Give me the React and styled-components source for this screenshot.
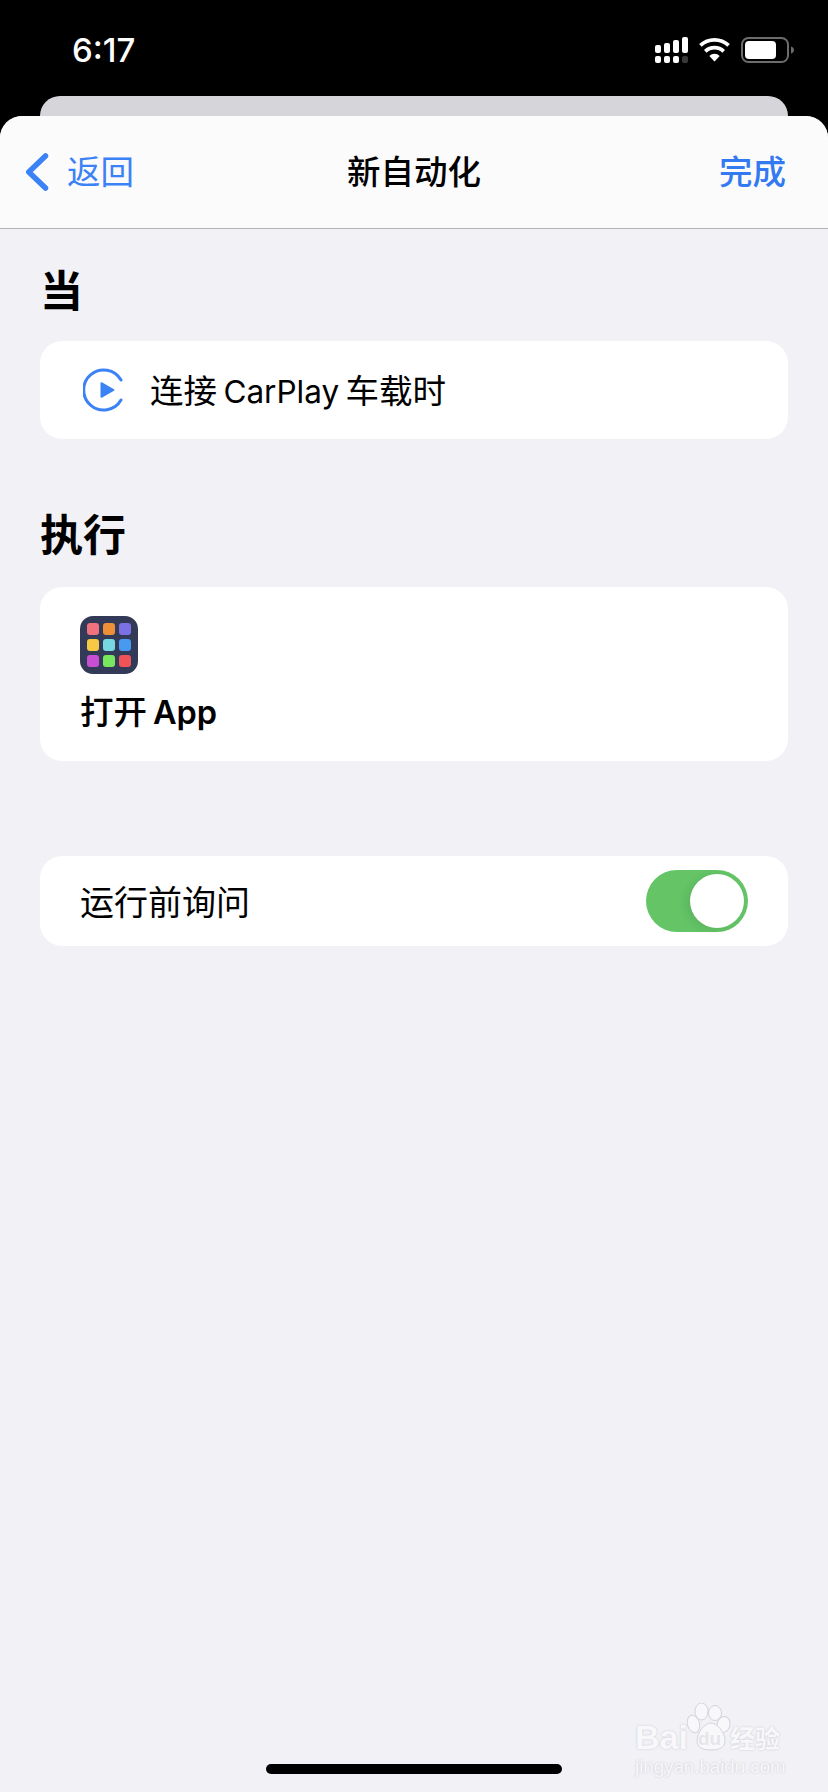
import React from 'react'
import styled, { createGlobalStyle } from 'styled-components'

const GlobalStyle = createGlobalStyle`
  html, body { margin: 0; padding: 0; background: #000; }
  body { font-family: Inter, "Noto Sans CJK SC", sans-serif; }
  * { box-sizing: border-box; }
`

const Phone = styled.div`
  position: relative;
  width: 828px;
  height: 1792px;
  background: #000;
  display: flex;
  flex-direction: column;
  overflow: hidden;
`

const StatusBar = styled.div`
  height: 96px;
  flex: none;
  display: flex;
  align-items: flex-start;
  justify-content: space-between;
  padding: 30px 34px 0 72px;
`

const Time = styled.div`
  font-family: Inter, "Noto Sans", sans-serif;
  font-size: 33px;
  line-height: 40px;
  font-weight: 500;
  color: #fff;
`

const StatusIcons = styled.div`
  display: flex;
  align-items: center;
  gap: 11px;
  padding-top: 7px;
`

const BackSheet = styled.div`
  flex: none;
  height: 20px;
  margin: 0 40px;
  background: #d5d5da;
  border-radius: 20px 20px 0 0;
`

const Sheet = styled.div`
  flex: 1;
  display: flex;
  flex-direction: column;
  background: #f1f1f6;
  border-radius: 22px 22px 0 0;
  overflow: hidden;
`

const NavBar = styled.div`
  flex: none;
  height: 113px;
  display: grid;
  grid-template-columns: 1fr auto 1fr;
  align-items: center;
  padding: 0 42px;
  background: #fbfbfc;
  border-bottom: 1px solid #b1b1b4;
`

const BackLink = styled.div`
  display: flex;
  align-items: center;
  gap: 18px;
  margin-left: -17px;
  color: #3b82f6;
  font-size: 33.5px;
  line-height: 44px;
`

const Title = styled.div`
  font-size: 33.5px;
  line-height: 44px;
  font-weight: 500;
  color: #000;
`

const DoneLink = styled.div`
  justify-self: end;
  font-size: 33.5px;
  line-height: 44px;
  font-weight: 500;
  color: #3279f2;
`

const Content = styled.div`
  flex: 1;
  display: flex;
  flex-direction: column;
  padding: 0 40px;
`

const SectionTitle = styled.h2`
  margin: ${(p) => p.$top}px 0 ${(p) => p.$bottom}px;
  font-size: 43px;
  line-height: 50px;
  font-weight: 700;
  color: #000;
`

const Card = styled.div`
  background: #fff;
  border-radius: 22px;
`

const TriggerCard = styled(Card)`
  height: 98px;
  display: flex;
  align-items: center;
  gap: 27px;
  padding-left: 43px;
  font-size: 33.5px;
  word-spacing: -3px;
  color: #000;
`

const TriggerText = styled.span`
  padding-bottom: 4px;
`

const LatinWord = styled.span`
  font-size: 31.5px;
`

const ActionCard = styled(Card)`
  height: 174px;
  padding: 29px 40px 0;
`

const ActionLabel = styled.div`
  margin-top: 14px;
  font-size: 33.5px;
  line-height: 48px;
  font-weight: 500;
  word-spacing: -3px;
  color: #000;
`

const AppWord = styled.span`
  font-size: 32.5px;
  font-weight: 600;
`

const AppIcon = styled.div`
  width: 58px;
  height: 58px;
  padding: 7px;
  display: grid;
  grid-template-columns: repeat(3, 12px);
  grid-auto-rows: 12px;
  gap: 4px;
  background: #333a58;
  border-radius: 13px;
`

const AppDot = styled.span`
  border-radius: 3px;
  background: ${(p) => p.$color};
`

const ToggleCard = styled(Card)`
  height: 90px;
  margin-top: 95px;
  display: flex;
  align-items: center;
  justify-content: space-between;
  padding: 0 40px;
  font-size: 34px;
  color: #000;
`

const ToggleLabel = styled.span`
  padding-bottom: 2px;
`

const Toggle = styled.div`
  width: 102px;
  height: 62px;
  padding: 4px;
  display: flex;
  justify-content: flex-end;
  background: #64c466;
  border-radius: 31px;
`

const Knob = styled.span`
  width: 54px;
  height: 54px;
  border-radius: 50%;
  background: #fff;
  box-shadow: -4px 2px 8px rgba(0, 0, 0, 0.08);
`

const HomeBar = styled.div`
  flex: none;
  width: 296px;
  height: 10px;
  margin: 0 auto 18px;
  border-radius: 5px;
  background: #000;
`

const Watermark = styled.div`
  position: absolute;
  left: 635px;
  top: 1722px;
  color: #f8f8fb;
  text-shadow: 0 0 2px #c4c4c9;
`

const WatermarkRow = styled.div`
  display: flex;
  align-items: center;
  height: 30px;
`

const WatermarkBai = styled.span`
  width: 52px;
  font-family: "Liberation Sans", sans-serif;
  font-size: 34px;
  line-height: 30px;
  font-weight: 700;
`

const PawBox = styled.div`
  position: relative;
  width: 43px;
  height: 30px;
`

const PawSvg = styled.svg`
  position: absolute;
  left: 0;
  top: -19px;
`

const PawText = styled.span`
  position: absolute;
  left: 11px;
  top: 6px;
  font-family: "Liberation Sans", sans-serif;
  font-size: 19px;
  line-height: 22px;
  font-weight: 700;
  color: #e6e6ea;
  text-shadow: none;
`

const WatermarkCn = styled.span`
  font-family: "Noto Sans CJK SC", sans-serif;
  font-size: 25px;
  line-height: 30px;
  font-weight: 700;
`

const WatermarkUrl = styled.div`
  margin-top: 5px;
  font-family: "Liberation Sans", sans-serif;
  font-size: 18.7px;
  line-height: 20px;
  white-space: nowrap;
`

const appColors = [
  '#f0727f', '#ee9038', '#7c71e4',
  '#f7c844', '#76d9e2', '#4799f2',
  '#c94fd2', '#78e65e', '#ef5357',
]

function SignalIcon() {
  return (
    <svg width="33" height="26" viewBox="0 0 33 26">
      <rect x="0" y="8" width="6" height="8" rx="2" fill="#fff" />
      <rect x="9" y="6" width="6" height="10" rx="2" fill="#fff" />
      <rect x="18" y="3" width="6" height="13" rx="2" fill="#fff" />
      <rect x="27" y="0" width="6" height="16" rx="2" fill="#fff" />
      <rect x="0" y="19" width="6" height="7" rx="2" fill="#fff" />
      <rect x="9" y="19" width="6" height="7" rx="2" fill="#fff" />
      <rect x="18" y="19" width="6" height="7" rx="2" fill="#fff" />
      <rect x="27" y="19" width="6" height="7" rx="2" fill="#3a3a3a" />
    </svg>
  )
}

function WifiIcon() {
  return (
    <svg width="31" height="26" viewBox="0 0 31 26">
      <path d="M15.500 24.500l-5.200-5.600a7.400 7.400 0 0 1 10.400 0z" fill="#fff" />
      <path d="M6.300 14.300a13.400 13.400 0 0 1 18.400 0" fill="none" stroke="#fff" strokeWidth="3.800" />
      <path d="M1.400 8.300a20.800 20.800 0 0 1 28.200 0" fill="none" stroke="#fff" strokeWidth="3.800" />
    </svg>
  )
}

function BatteryIcon() {
  return (
    <svg width="53" height="26" viewBox="0 0 53 26">
      <rect x="1" y="1" width="46" height="24" rx="6.500" fill="none" stroke="#6c6c6c" strokeWidth="2" />
      <rect x="4" y="4" width="31" height="18" rx="4" fill="#fff" />
      <path d="M50 9.500c2 .6 3 2 3 3.500s-1 2.900-3 3.500z" fill="#6c6c6c" />
    </svg>
  )
}

function ChevronIcon() {
  return (
    <svg width="24" height="40" viewBox="0 0 24 40">
      <path d="M20.500 4L3.800 20l16.700 16" fill="none" stroke="#3b82f6" strokeWidth="5.500" strokeLinecap="round" strokeLinejoin="round" />
    </svg>
  )
}

function PlayCircleIcon() {
  return (
    <svg width="40" height="44" viewBox="0 0 40 44">
      <path d="M38 12A20 20 0 1 0 38 32" fill="none" stroke="#3b82f6" strokeWidth="3" strokeLinecap="round" />
      <path d="M17.500 15c0-.7.7-1 1.300-.7L31 21.300c.6.4.6 1 0 1.400L18.800 29.700c-.6.3-1.300 0-1.300-.7z" fill="#3b82f6" />
    </svg>
  )
}

function PawIcon() {
  return (
    <PawSvg width="46" height="49" viewBox="0 0 46 49">
      <g fill="#f8f8fb" stroke="#d4d4d9">
        <ellipse cx="6.500" cy="21" rx="6" ry="9" transform="rotate(-15 6.500 21)" />
        <ellipse cx="14.500" cy="8.500" rx="6.500" ry="8.500" />
        <ellipse cx="28" cy="10" rx="6.500" ry="7.500" />
        <ellipse cx="36.500" cy="21.500" rx="6.500" ry="8" transform="rotate(15 36.500 21.500)" />
        <path d="M24 20c6 0 14 9 14 18 0 6-5 9-14 9s-14-3-14-9c0-9 8-18 14-18z" />
      </g>
    </PawSvg>
  )
}

export default function App() {
  return (
    <Phone>
      <GlobalStyle />
      <StatusBar>
        <Time>6:17</Time>
        <StatusIcons>
          <SignalIcon />
          <WifiIcon />
          <BatteryIcon />
        </StatusIcons>
      </StatusBar>
      <BackSheet />
      <Sheet>
        <NavBar>
          <BackLink>
            <ChevronIcon />
            <span>返回</span>
          </BackLink>
          <Title>新自动化</Title>
          <DoneLink>完成</DoneLink>
        </NavBar>
        <Content>
          <SectionTitle $top={37} $bottom={25}>当</SectionTitle>
          <TriggerCard>
            <PlayCircleIcon />
            <TriggerText>连接 <LatinWord>CarPlay</LatinWord> 车载时</TriggerText>
          </TriggerCard>
          <SectionTitle $top={71} $bottom={27}>执行</SectionTitle>
          <ActionCard>
            <AppIcon>
              {appColors.map((c) => (
                <AppDot key={c} $color={c} />
              ))}
            </AppIcon>
            <ActionLabel>打开 <AppWord>App</AppWord></ActionLabel>
          </ActionCard>
          <ToggleCard>
            <ToggleLabel>运行前询问</ToggleLabel>
            <Toggle>
              <Knob />
            </Toggle>
          </ToggleCard>
        </Content>
        <HomeBar />
      </Sheet>
      <Watermark>
        <WatermarkRow>
          <WatermarkBai>Bai</WatermarkBai>
          <PawBox>
            <PawIcon />
            <PawText>du</PawText>
          </PawBox>
          <WatermarkCn>经验</WatermarkCn>
        </WatermarkRow>
        <WatermarkUrl>jingyan.baidu.com</WatermarkUrl>
      </Watermark>
    </Phone>
  )
}
